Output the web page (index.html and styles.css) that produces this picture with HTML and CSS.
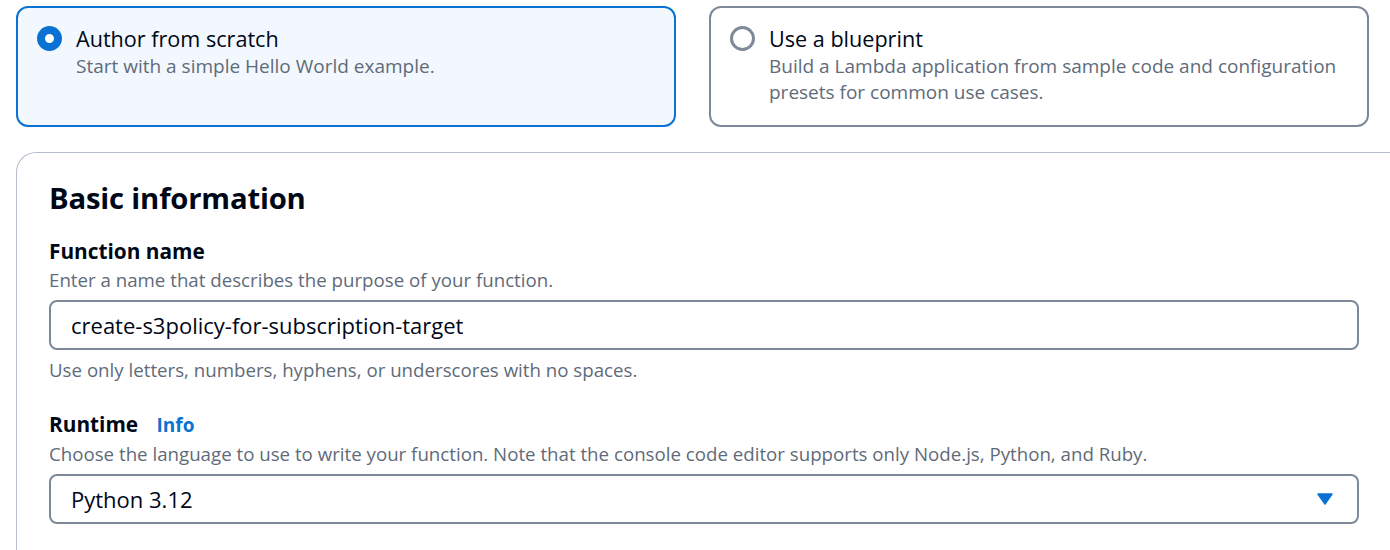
FILE: index.html
```html
<!DOCTYPE html>
<html lang="en">
<head>
<meta charset="utf-8">
<title>Create function</title>
<link rel="stylesheet" href="styles.css">
</head>
<body>
<div class="page">
  <div class="tiles">
    <div class="tile tile-selected">
      <span class="radio radio-on"></span>
      <div class="tile-text">
        <div class="tile-title">Author from scratch</div>
        <div class="tile-desc">Start with a simple Hello World example.</div>
      </div>
    </div>
    <div class="tile">
      <span class="radio"></span>
      <div class="tile-text">
        <div class="tile-title">Use a blueprint</div>
        <div class="tile-desc">Build a Lambda application from sample code and configuration presets for common use cases.</div>
      </div>
    </div>
  </div>
  <section class="panel">
    <h2 class="panel-title">Basic information</h2>
    <div class="field">
      <div class="label">Function name</div>
      <div class="desc">Enter a name that describes the purpose of your function.</div>
      <div class="input">create-s3policy-for-subscription-target</div>
      <div class="hint">Use only letters, numbers, hyphens, or underscores with no spaces.</div>
    </div>
    <div class="field field-runtime">
      <div class="label">Runtime <a class="info" href="#">Info</a></div>
      <div class="desc">Choose the language to use to write your function. Note that the console code editor supports only Node.js, Python, and Ruby.</div>
      <div class="input select">
        <span>Python 3.12</span>
        <svg class="caret" width="16" height="12" viewBox="0 0 16 12"><path d="M1 1 H15 L8 11 Z" fill="#0972d3" stroke="#0972d3" stroke-width="1.5" stroke-linejoin="round"/></svg>
      </div>
    </div>
  </section>
</div>
</body>
</html>
```
FILE: styles.css
```css
html, body {
  margin: 0;
  padding: 0;
  background: #ffffff;
  overflow: hidden;
}
body {
  font-family: "Open Sans", "Noto Sans", sans-serif;
  color: #000716;
}
.page {
  padding: 6px 0 0 16px;
  width: 1420px;
}
.tiles {
  display: flex;
  gap: 33px;
}
.tile {
  box-sizing: border-box;
  width: 660px;
  height: 121px;
  border: 2px solid #7d8998;
  border-radius: 12px;
  display: flex;
  gap: 14px;
  padding: 17px 19px 0 19px;
  background: #ffffff;
}
.tile-selected {
  border-color: #0972d3;
  background: #f2f8fd;
}
.radio {
  flex: none;
  box-sizing: border-box;
  width: 25px;
  height: 25px;
  margin-top: 1px;
  border: 3px solid #7d8998;
  border-radius: 50%;
  background: #fff;
}
.radio-on {
  border: 8.5px solid #0972d3;
}
.tile-title {
  font-size: 21.6px;
  line-height: 28px;
}
.tile-desc {
  margin-top: 0;
  font-size: 19px;
  line-height: 26px;
  color: #5f6b7a;
}
.panel {
  margin-top: 25px;
  border: 1px solid #b6bec9;
  border-right: none;
  border-bottom: none;
  border-radius: 20px 0 0 0;
  padding: 25px 60px 40px 32px;
  width: 1310px;
}
.panel-title {
  margin: 0 0 19px 0;
  font-size: 29.3px;
  line-height: 40px;
  font-weight: 700;
  letter-spacing: -0.2px;
}
.label {
  font-size: 20.8px;
  line-height: 28px;
  font-weight: 700;
}
.desc, .hint {
  font-size: 18.7px;
  line-height: 24px;
  color: #5f6b7a;
}
.desc {
  margin-top: 3px;
  margin-bottom: 8px;
}
.hint {
  margin-top: 8px;
}
.field-runtime {
  margin-top: 28px;
}
.info {
  color: #0972d3;
  font-size: 19px;
  font-weight: 700;
  text-decoration: none;
  margin-left: 13px;
}
.input {
  box-sizing: border-box;
  height: 50px;
  border: 2px solid #7d8998;
  border-radius: 8px;
  padding: 0 20px;
  display: flex;
  align-items: center;
  font-size: 22px;
  color: #000716;
}
.select {
  justify-content: space-between;
  padding-right: 24px;
}
.caret {
  display: block;
}
```
